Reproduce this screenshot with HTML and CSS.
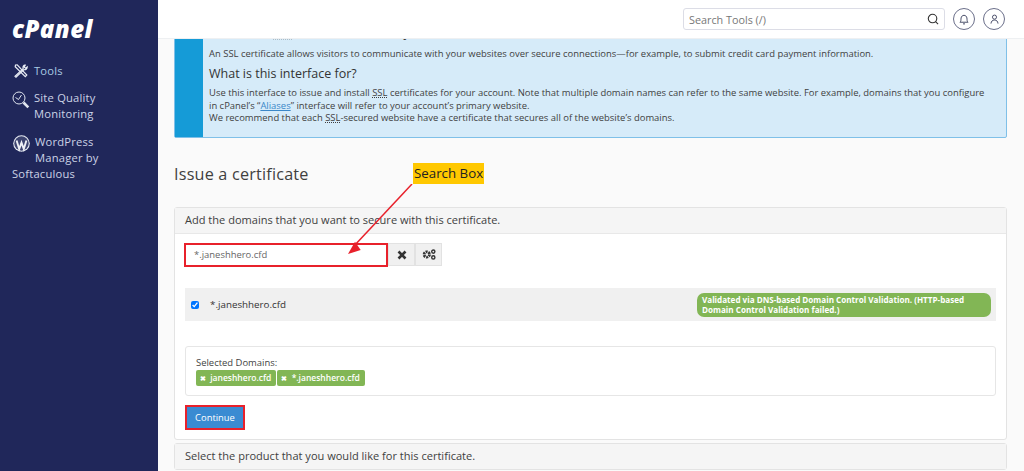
FILE: index.html
```html
<!DOCTYPE html>
<html lang="en">
<head>
    <meta charset="UTF-8">
    <title>SSL/TLS Wizard</title>
    <link rel="stylesheet" href="styles.css">
</head>
<body>
    <div class="page">
        <aside class="sidebar">
            <div class="logo">cPanel</div>
            <a class="nav-item tools">
                <svg class="nav-icon" width="14" height="14" viewBox="0 0 14 14" fill="none" stroke="#e8ecf4" stroke-width="1.2">
                    <path d="M1.5 1 L3.2 0.8 L12.8 11 L11.3 12.6 L1.2 2.8 Z"/>
                    <path d="M9.2 4.6 L1 12.2 L2 13.2 L10 5.6 C11.6 6.2 13.2 5 13.2 3 L11.6 4.2 L10.2 3 L11.2 1.2 C9.6 1 8.6 2.8 9.2 4.6 Z"/>
                </svg>
                <span>Tools</span>
            </a>
            <a class="nav-item quality">
                <svg class="nav-icon" width="18" height="18" viewBox="0 0 18 18" fill="none" stroke="#dfe4ee" stroke-width="1">
                    <circle cx="7" cy="7" r="6"/>
                    <path d="M3.5 6.5 L6.5 8.5 L9.5 4"/>
                    <path d="M11.5 11.5 L16.3 16.3" stroke-width="2.6"/>
                </svg>
                <span>Site Quality<br>Monitoring</span>
            </a>
            <a class="nav-item wordpress">
                <svg class="wp-icon" width="17" height="17" viewBox="0 0 17 17">
                    <circle cx="8.5" cy="8.5" r="8.3" fill="#e8ecf4"/>
                    <circle cx="8.5" cy="8.5" r="7.2" fill="#3d4470"/>
                    <path d="M3.6 5.5 L6.2 14 L8.5 7.6 L10.8 14 L13.4 5.5" fill="none" stroke="#eef0f6" stroke-width="1.9"/>
                </svg>
                WordPress<br>Manager by<br>Softaculous
            </a>
        </aside>
        <div class="main">
            <header class="topbar">
                <div class="tool-search">
                    <span>Search Tools (/)</span>
                    <svg width="12" height="12" viewBox="0 0 13 13" fill="none" stroke="#333" stroke-width="1.2">
                        <circle cx="6" cy="6" r="4.6"/>
                        <path d="M9.3 9.3 L12 12"/>
                    </svg>
                </div>
                <div class="round-btn">
                    <svg width="10" height="11" viewBox="0 0 11 12" fill="none" stroke="#4a4f6a" stroke-width="1.1">
                        <path d="M1 9 C2.5 8 2 6 2.3 4.3 C2.6 2.4 4 1.4 5.5 1.4 C7 1.4 8.4 2.4 8.7 4.3 C9 6 8.5 8 10 9 Z"/>
                        <path d="M4.4 10.8 H6.6"/>
                    </svg>
                </div>
                <div class="round-btn">
                    <svg width="9" height="11" viewBox="0 0 11 13" fill="none" stroke="#4a4f6a" stroke-width="1.2">
                        <circle cx="5.5" cy="3.6" r="2.5"/>
                        <path d="M1.2 11.5 C1.5 8.5 3 7.2 5.5 7.2 C8 7.2 9.5 8.5 9.8 11.5"/>
                    </svg>
                </div>
            </header>
            <div class="content">
                <section class="alert">
                    <div class="alert-bar"></div>
                    <div class="alert-body">
                        <h4 class="clipped">What is an <abbr>SSL</abbr> certificate, and why</h4>
                        <p>An SSL certificate allows visitors to communicate with your websites over secure connections—for example, to submit credit card payment information.</p>
                        <h4>What is this interface for?</h4>
                        <p>Use this interface to issue and install <abbr>SSL</abbr> certificates for your account. Note that multiple domain names can refer to the same website. For example, domains that you configure in cPanel’s “<a href="#">Aliases</a>” interface will refer to your account’s primary website.<br>We recommend that each <abbr>SSL</abbr>-secured website have a certificate that secures all of the website’s domains.</p>
                    </div>
                </section>

                <h2 class="section-title">Issue a certificate</h2>

                <section class="panel">
                    <div class="panel-head">Add the domains that you want to secure with this certificate.</div>
                    <div class="panel-body">
                        <div class="domain-search">
                            <div class="domain-input">*.janeshhero.cfd</div>
                            <button class="icon-btn"><svg width="10" height="10" viewBox="0 0 10 10" stroke="#333" stroke-width="2.6"><path d="M1.5 1.5 L8.5 8.5 M8.5 1.5 L1.5 8.5"/></svg></button>
                            <button class="icon-btn"><svg width="14" height="11" viewBox="0 0 14 11" fill="none" stroke="#333"><circle cx="4.8" cy="5.5" r="2.7" stroke-width="2.8" stroke-dasharray="2 0.8"/><circle cx="11.3" cy="2.6" r="1.6" stroke-width="1.4"/><circle cx="11.3" cy="8.4" r="1.6" stroke-width="1.4"/></svg></button>
                        </div>
                        <div class="domain-row">
                            <input type="checkbox" checked>
                            <span class="domain-name">*.janeshhero.cfd</span>
                            <span class="valid-badge">Validated via DNS-based Domain Control Validation. (HTTP-based Domain Control Validation failed.)</span>
                        </div>
                        <div class="selected-box">
                            <div>Selected Domains:</div>
                            <div class="chips">
                                <span class="chip"><span class="chip-x">✖</span> janeshhero.cfd</span>
                                <span class="chip"><span class="chip-x">✖</span> *.janeshhero.cfd</span>
                            </div>
                        </div>
                        <button class="continue">Continue</button>
                    </div>
                </section>

                <section class="panel collapsed">
                    <div class="panel-head">Select the product that you would like for this certificate.</div>
                </section>

                <div class="callout">Search Box</div>
                <svg class="arrow" width="70" height="74" viewBox="0 0 70 74" fill="none">
                    <path d="M66 0 L8 62" stroke="#e8212b" stroke-width="1.5"/>
                    <path d="M2 70 L9 57.7 L14.7 66 Z" fill="#e8212b"/>
                </svg>
            </div>
        </div>
    </div>
</body>
</html>
```

FILE: styles.css
```css
* {
    margin: 0;
    padding: 0;
    box-sizing: border-box;
}

html, body {
    height: 100%;
    overflow: hidden;
}

body {
    font-family: "Open Sans", "Liberation Sans", sans-serif;
    font-size: 9.45px;
    color: #3f3f3f;
    background: #fafafa;
}

.page {
    display: flex;
    height: 471px;
}

.sidebar {
    width: 158px;
    flex-shrink: 0;
    background: #20275a;
    color: #ccd3e6;
    padding: 18px 0 0 12px;
    font-size: 11.2px;
    letter-spacing: 0.2px;
}

.logo {
    font-size: 24px;
    font-weight: 800;
    font-style: italic;
    line-height: 22px;
    color: #fff;
    letter-spacing: 0.4px;
    margin-bottom: 21px;
}

.nav-item {
    display: flex;
    line-height: 16.3px;
}

.nav-icon {
    flex-shrink: 0;
}

.tools {
    align-items: center;
    height: 20px;
    margin-bottom: 9px;
}

.tools .nav-icon {
    margin: 0 6px 0 2px;
}

.tools span {
    color: #a9cbe3;
}

.quality {
    margin-bottom: 11px;
}

.quality .nav-icon {
    margin: 1px 4px 0 0;
}

.wordpress {
    display: block;
}

.wp-icon {
    float: left;
    margin: 1px 5px 13px 1px;
}

.main {
    flex: 1;
    min-width: 0;
    display: flex;
    flex-direction: column;
}

.topbar {
    height: 39px;
    flex-shrink: 0;
    background: #fff;
    border-bottom: 1px solid #eef0f2;
    display: flex;
    align-items: center;
    justify-content: flex-end;
    gap: 8px;
    padding-right: 19px;
    position: relative;
    z-index: 2;
}

.tool-search {
    width: 262px;
    height: 22px;
    border: 1px solid #dcdde6;
    border-radius: 3px;
    display: flex;
    align-items: center;
    justify-content: space-between;
    padding: 0 5px;
    font-size: 10.8px;
    color: #777;
}

.round-btn {
    width: 22px;
    height: 22px;
    border: 1px solid #6b6f8a;
    border-radius: 50%;
    display: flex;
    align-items: center;
    justify-content: center;
}

.content {
    flex: 1;
    padding: 0 17px 0 16px;
    overflow: hidden;
    position: relative;
}

.alert {
    display: flex;
    height: 118px;
    margin-top: -19px;
    background: #d6ebf9;
    border: 1px solid #7fc0e8;
    border-radius: 2px;
}

.alert-bar {
    width: 28px;
    background: #159bd7;
    flex-shrink: 0;
}

.alert-body {
    padding: 0 14px 0 6px;
}

.alert-body h4 {
    font-size: 12.5px;
    font-weight: 400;
    color: #333;
    line-height: 18px;
    margin: 5px 0 4px;
}

.alert-body h4.clipped {
    margin: 3px 0 6px;
}

.alert-body p {
    line-height: 12.4px;
}

abbr {
    text-decoration: underline dotted;
}

.alert-body a {
    color: #3a87c8;
    text-decoration: underline;
}

.section-title {
    font-size: 16.2px;
    font-weight: 400;
    letter-spacing: 0.2px;
    line-height: 22px;
    margin: 25px 0 22px;
}

.panel {
    background: #fff;
    border: 1px solid #e3e3e3;
    border-radius: 3px;
    margin-bottom: 3px;
}

.panel-head {
    background: #f5f5f5;
    height: 25px;
    padding: 0 10px;
    line-height: 24px;
    font-size: 11.05px;
}

.panel-body {
    padding: 9px 10px 9px;
    border-top: 1px solid #e8e8e8;
}

.domain-search {
    display: flex;
    height: 24px;
    margin-left: -1px;
}

.domain-input {
    width: 204px;
    height: 24px;
    background: #fff;
    border: 2px solid #e8212b;
    padding-left: 8px;
    line-height: 20px;
    color: #666;
}

.icon-btn {
    width: 27px;
    height: 23px;
    background: #f0f0f0;
    border: 1px solid #e2e2e2;
    display: flex;
    align-items: center;
    justify-content: center;
}

.domain-row {
    display: flex;
    align-items: center;
    height: 33px;
    margin-top: 21px;
    background: #f0f0f0;
    padding: 0 6px;
    font-size: 9.8px;
}

.domain-row input {
    width: 8px;
    height: 8px;
    margin-right: 11px;
}

.domain-name {
    color: #333;
    flex: 1;
}

.valid-badge {
    width: 294px;
    margin-right: -1px;
    background: #82b655;
    color: #fff;
    font-size: 8.1px;
    font-weight: 700;
    line-height: 10px;
    padding: 2px 5px;
    border-radius: 7px;
}

.selected-box {
    margin-top: 25px;
    height: 50px;
    background: #fff;
    border: 1px solid #e6e6e6;
    border-radius: 3px;
    padding: 9px 10px;
    line-height: 13px;
}

.chips {
    display: flex;
    margin-top: 1px;
}

.chip {
    background: #82b655;
    color: #fff;
    font-size: 8.5px;
    font-weight: 600;
    height: 16px;
    line-height: 15px;
    padding: 0 5px 0 4px;
    margin-right: 1px;
    border-radius: 2px;
}

.chip-x {
    font-size: 7px;
    margin-right: 2px;
}

.continue {
    display: block;
    margin-top: 9px;
    width: 60px;
    height: 25px;
    background: #3a8bd2;
    color: #fff;
    border: 2px solid #e8212b;
    font-family: inherit;
    font-size: 9.4px;
}

.collapsed {
    background: #f5f5f5;
}

.callout {
    position: absolute;
    left: 255px;
    top: 124px;
    background: #ffc800;
    color: #222;
    font-size: 13.3px;
    line-height: 21px;
    padding: 0 1px;
}

.arrow {
    position: absolute;
    left: 188px;
    top: 145px;
}
```
